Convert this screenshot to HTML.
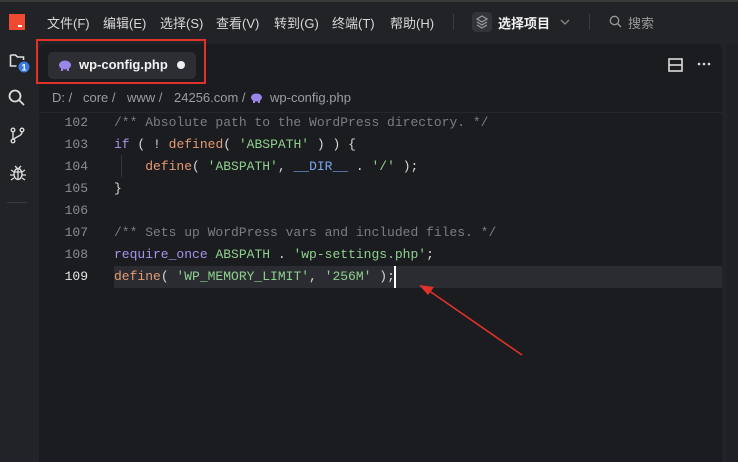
<!DOCTYPE html>
<html><head><meta charset="utf-8"><style>
*{margin:0;padding:0;box-sizing:border-box}
body{width:738px;height:462px;overflow:hidden;background:#222327;font-family:"Liberation Sans","Noto Sans CJK SC",sans-serif;position:relative;color:#ccc}
.top{position:absolute;left:0;top:0;width:738px;height:44px;background:#222327}
.topline{position:absolute;left:0;top:0;width:738px;height:2px;background:#3a3a3a}
.logo{position:absolute;left:9px;top:14px;width:16px;height:16px;background:#f04b32}
.logo:after{content:"";position:absolute;left:9px;top:11px;width:4px;height:2px;background:#fff}
.menu{position:absolute;top:13px;font-size:13px;color:#d8d8d8}
.side{position:absolute;left:0;top:44px;width:39px;height:418px;background:#222327}
.panel{position:absolute;left:39px;top:44px;width:683px;height:418px;background:#1b1c20;border-radius:6px 6px 0 0}
.rstrip{position:absolute;left:727px;top:44px;width:11px;height:418px;background:#1f2024}
.tab{position:absolute;left:48px;top:52px;width:148px;height:27px;background:#2d2e34;border-radius:5px}
.redbox{position:absolute;left:36px;top:39px;width:170px;height:45px;border:2px solid #e0312a}
.code{position:absolute;font-family:"Liberation Mono",monospace;font-size:13px;line-height:22px;white-space:pre}
.ln{left:60px;top:112px;width:28px;text-align:right;color:#8a8c93}
.src{left:114px;top:112px;color:#c8c8c8}
.c{color:#7a7d85}.k{color:#a793e8}.f{color:#e59a73}.s{color:#8ed08e}.p{color:#d8d8d8}.d{color:#7aa6f0}
.bc{position:absolute;top:90px;font-size:13px;color:#9a9ca3;white-space:pre}
</style></head><body>
<div class="top"></div><div class="topline"></div>
<div class="logo"></div>
<div class="menu" style="left:47px">文件(F)</div>
<div class="menu" style="left:103px">编辑(E)</div>
<div class="menu" style="left:160px">选择(S)</div>
<div class="menu" style="left:216px">查看(V)</div>
<div class="menu" style="left:274px">转到(G)</div>
<div class="menu" style="left:332px">终端(T)</div>
<div class="menu" style="left:390px">帮助(H)</div>
<div style="position:absolute;left:453px;top:14px;width:1px;height:16px;background:#3a3b40"></div>
<div style="position:absolute;left:472px;top:12px;width:20px;height:20px;background:#33343a;border-radius:4px"></div>
<svg style="position:absolute;left:476px;top:15px" width="12" height="14" viewBox="0 0 12 14"><path d="M6 1L11 4 6 7 1 4Z M1 7l5 3 5-3 M1 10l5 3 5-3" fill="none" stroke="#999" stroke-width="1.3"/></svg>
<div class="menu" style="left:498px;color:#f0f0f0;font-weight:bold">选择项目</div>
<svg style="position:absolute;left:560px;top:18px" width="10" height="8"><path d="M1 2l4 4 4-4" fill="none" stroke="#888" stroke-width="1.3"/></svg>
<div style="position:absolute;left:589px;top:14px;width:1px;height:16px;background:#3a3b40"></div>
<svg style="position:absolute;left:609px;top:15px" width="13" height="13"><circle cx="5.5" cy="5.5" r="4.2" fill="none" stroke="#999" stroke-width="1.3"/><path d="M8.5 8.5l3.5 3.5" stroke="#999" stroke-width="1.3"/></svg>
<div class="menu" style="left:628px;color:#999">搜索</div>

<div class="side"></div>
<svg style="position:absolute;left:9px;top:52px" width="22" height="22"><path d="M1.5 3h5l2 2h6v3 M1.5 3v11h6" fill="none" stroke="#ddd" stroke-width="1.6"/><circle cx="15" cy="15" r="5.5" fill="#3a7ae0"/><text x="15" y="18.5" font-size="9" fill="#fff" text-anchor="middle" font-family="Liberation Sans" font-weight="bold">1</text></svg>
<svg style="position:absolute;left:8px;top:89px" width="18" height="18"><circle cx="7" cy="7" r="5.5" fill="none" stroke="#ddd" stroke-width="1.8"/><path d="M11 11l5 5" stroke="#ddd" stroke-width="1.8"/></svg>
<svg style="position:absolute;left:10px;top:127px" width="16" height="17"><circle cx="3" cy="3" r="1.8" fill="none" stroke="#ddd" stroke-width="1.4"/><circle cx="3" cy="14" r="1.8" fill="none" stroke="#ddd" stroke-width="1.4"/><circle cx="12" cy="3" r="1.8" fill="none" stroke="#ddd" stroke-width="1.4"/><path d="M3 5v7 M12 5c0 4-5 4-8.5 7.5" fill="none" stroke="#ddd" stroke-width="1.4"/></svg>
<svg style="position:absolute;left:9px;top:164px" width="18" height="18"><ellipse cx="9" cy="10" rx="4" ry="5.5" fill="none" stroke="#ddd" stroke-width="1.4"/><path d="M5 8h8 M9 5v10 M2 6l3 2 M16 6l-3 2 M1 11h4 M17 11h-4 M2 16l3-2 M16 16l-3-2 M6 2l2 2 M12 2l-2 2" stroke="#ddd" stroke-width="1.3" fill="none"/></svg>
<div style="position:absolute;left:7px;top:202px;width:20px;height:1px;background:#3a3b40"></div>

<div class="panel"></div><div class="rstrip"></div>
<div class="tab"></div>
<svg style="position:absolute;left:58px;top:60px" width="14" height="11"><ellipse cx="7" cy="5" rx="6" ry="4.5" fill="#9a86e8"/><rect x="3" y="7" width="2" height="4" fill="#9a86e8"/><rect x="9" y="7" width="2" height="4" fill="#9a86e8"/></svg>
<div style="position:absolute;left:79px;top:57px;font-size:13px;font-weight:bold;color:#f2f2f2">wp-config.php</div>
<div style="position:absolute;left:177px;top:61px;width:8px;height:8px;border-radius:50%;background:#eee"></div>
<div class="redbox"></div>
<svg style="position:absolute;left:668px;top:58px" width="16" height="14"><rect x="1" y="1" width="13" height="12" fill="none" stroke="#ddd" stroke-width="1.6"/><path d="M1 7h13" stroke="#ddd" stroke-width="1.6"/></svg>
<svg style="position:absolute;left:697px;top:62px" width="16" height="4"><circle cx="2" cy="2" r="1.3" fill="#ddd"/><circle cx="7" cy="2" r="1.3" fill="#ddd"/><circle cx="12" cy="2" r="1.3" fill="#ddd"/></svg>

<div class="bc" style="left:52px">D: /</div>
<div class="bc" style="left:83px">core /</div>
<div class="bc" style="left:127px">www /</div>
<div class="bc" style="left:174px">24256.com /</div>
<svg style="position:absolute;left:250px;top:93px" width="13" height="10"><ellipse cx="6.5" cy="4.5" rx="5.5" ry="4" fill="#9a86e8"/><rect x="3" y="6" width="2" height="4" fill="#9a86e8"/><rect x="8" y="6" width="2" height="4" fill="#9a86e8"/></svg>
<div class="bc" style="left:270px">wp-config.php</div>
<div style="position:absolute;left:39px;top:112px;width:683px;height:1px;background:#26272c"></div>

<div style="position:absolute;left:114px;top:266px;width:608px;height:22px;background:#2a2c32"></div>
<div style="position:absolute;left:121px;top:155px;width:1px;height:22px;background:#33353a"></div>
<div class="code ln">102
103
104
105
106
107
108
<span style="color:#e8e8e8">109</span></div>
<div class="code src"><span class="c">/** Absolute path to the WordPress directory. */</span>
<span class="k">if</span> <span class="p">( ! </span><span class="f">defined</span><span class="p">( </span><span class="s">'ABSPATH'</span><span class="p"> ) ) {</span>
    <span class="f">define</span><span class="p">( </span><span class="s">'ABSPATH'</span><span class="p">, </span><span class="d">__DIR__</span><span class="p"> . </span><span class="s">'/'</span><span class="p"> );</span>
<span class="p">}</span>

<span class="c">/** Sets up WordPress vars and included files. */</span>
<span class="k">require_once</span> <span class="s">ABSPATH</span><span class="p"> . </span><span class="s">'wp-settings.php'</span><span class="p">;</span>
<span class="f">define</span><span class="p">( </span><span class="s">'WP_MEMORY_LIMIT'</span><span class="p">, </span><span class="s">'256M'</span><span class="p"> );</span></div>
<div style="position:absolute;left:394px;top:266px;width:2px;height:22px;background:#fff"></div>
<svg style="position:absolute;left:0;top:0" width="738" height="462"><path d="M522 355L428 290" stroke="#e0312a" stroke-width="1.6"/><path d="M419 285L434 287 428 295Z" fill="#e0312a"/></svg>
</body></html>
